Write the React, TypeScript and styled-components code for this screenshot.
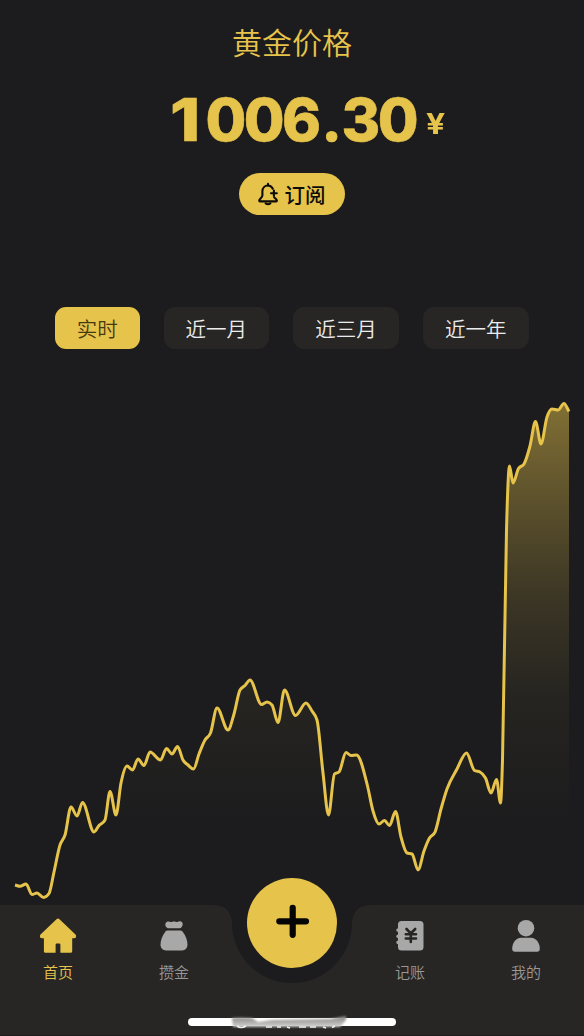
import React from 'react';
import styled, { createGlobalStyle } from 'styled-components';

const GOLD = '#e6c34a';
const BG = '#1c1c1e';
const PANEL = '#272625';

const Global = createGlobalStyle`
  * { box-sizing: border-box; }
  body { margin: 0; background: ${BG}; }
  button { font: inherit; border: 0; padding: 0; background: none; }
`;

const Screen = styled.main`
  width: 584px;
  height: 1036px;
  overflow: hidden;
  display: flex;
  flex-direction: column;
  background: ${BG};
  font-family: 'Noto Sans CJK SC', sans-serif;
`;

const Header = styled.header`
  display: flex;
  flex-direction: column;
  align-items: center;
  height: 307px;
  padding-top: 20px;
`;

const Title = styled.h1`
  margin: 0;
  font-size: 30px;
  line-height: 42px;
  font-weight: 350;
  color: ${GOLD};
`;

const PriceRow = styled.div`
  display: flex;
  align-items: baseline;
  align-self: flex-start;
  height: 77px;
  margin: 22px 0 0 170px;
  color: ${GOLD};
  font-family: Inter, sans-serif;
  line-height: 72px;
`;

const Price = styled.span`
  width: 256px;
  white-space: nowrap;
  font-size: 59px;
  font-weight: 850;
  letter-spacing: -2.6px;
  -webkit-text-stroke: 0.6px ${GOLD};
`;

const LeadDigit = styled.span`
  display: inline-block;
  margin-right: 12px;
  transform: scaleX(1.16);
  transform-origin: left;
`;

const Point = styled.span`
  margin: 0 2px 0 3px;
`;

const Currency = styled.span`
  position: relative;
  top: -7px;
  font-size: 28px;
  font-weight: 700;
  line-height: 30px;
  transform: scaleX(1.2);
  transform-origin: left;
`;

const Subscribe = styled.button`
  display: flex;
  align-items: center;
  justify-content: center;
  gap: 6px;
  width: 106px;
  height: 42px;
  margin-top: 12px;
  padding-right: 2px;
  border-radius: 21px;
  background: ${GOLD};
  color: #0d0c08;
  font-size: 20.5px;
  font-weight: 500;
  line-height: 42px;
`;

const Tabs = styled.nav`
  display: flex;
  gap: 24px;
  padding-left: 55px;
  height: 42px;
`;

const Tab = styled.button<{ $active?: boolean }>`
  height: 42px;
  width: ${(p) => (p.$active ? 84.5 : 105.7)}px;
  border-radius: 11px;
  background: ${(p) => (p.$active ? GOLD : PANEL)};
  color: ${(p) => (p.$active ? '#443a12' : '#ececec')};
  font-size: 20.5px;
  font-weight: 350;
  line-height: 42px;
`;

const ChartArea = styled.section`
  height: 556px;
  svg { display: block; }
`;

const BottomBar = styled.footer`
  position: relative;
  height: 131px;
`;

const BarShape = styled.svg`
  position: absolute;
  inset: 0;
`;

const NavItems = styled.nav`
  position: relative;
  display: grid;
  grid-template-columns: 116px 116px 120px 116px 116px;
  height: 113px;
`;

const NavItem = styled.button<{ $active?: boolean }>`
  display: flex;
  flex-direction: column;
  align-items: center;
  justify-content: flex-start;
  padding-top: 11px;
  height: 90px;
  color: ${(p) => (p.$active ? GOLD : '#a8a8a8')};
  svg { display: block; }
`;

const NavLabel = styled.span<{ $active?: boolean }>`
  margin-top: 7px;
  font-size: 15px;
  line-height: 22px;
  font-weight: 350;
  color: ${(p) => (p.$active ? GOLD : '#989898')};
`;

const AddButton = styled.button`
  justify-self: center;
  width: 90px;
  height: 90px;
  margin-top: -27px;
  border-radius: 50%;
  background: ${GOLD};
  display: flex;
  align-items: center;
  justify-content: center;
`;

const HomeIndicator = styled.div`
  position: relative;
  width: 208px;
  height: 8px;
  margin: 0 auto;
  border-radius: 4px;
  background: #fff;
`;

const Smudge = styled.svg`
  position: absolute;
  left: 36px;
  top: -16px;
`;

type Coord = [number, number];

const CHART_TOP = 349;

const points: Coord[] = [
  [15, 885], [20, 886.3], [26, 884], [32, 894.5], [37, 893], [43.5, 897.5], [49, 893.5], [54, 872],
  [60, 845], [65, 835], [71, 807], [77, 816], [82.5, 802.5], [94, 832], [99, 825.5], [105, 820],
  [110, 791.5], [116, 815], [121, 783], [127, 766], [132.5, 770], [138, 759], [144, 765.5], [150, 752],
  [160.5, 760], [166.5, 748.5], [172, 754], [177.5, 746.5], [183, 760], [188, 765],
  [193.5, 769], [199, 754], [205, 740], [210.5, 733], [217, 708], [228, 730], [234, 714],
  [240, 690], [245, 685.5], [250, 680], [261.5, 704.5], [267, 702], [272, 705],
  [278, 722.5], [284.5, 690], [295.5, 715.5], [306, 703], [312, 711],
  [317, 720], [323, 773], [328.5, 815], [334.5, 774], [339, 772], [346, 752.5], [351, 755.5], [356.5, 755],
  [367.5, 786], [373, 811], [379, 824], [384.5, 820.5], [389.5, 825.5], [395.5, 811.5],
  [401, 837], [407, 853], [412, 854], [418, 870], [424, 851], [429.5, 838], [435, 832], [441, 809],
  [447, 789], [457, 769], [466.5, 753], [474.5, 770.5], [480, 772], [485.5, 778],
  [491, 793], [496.5, 779.5], [500.5, 803], [502.5, 760], [506.5, 530], [509.5, 466], [513, 483], [518.5, 468.5],
  [524, 464], [530, 446], [535.5, 421.5], [541, 444], [547, 417], [552, 409], [558, 410],
  [564, 403.5], [569, 411.5],
].map(([x, y]) => [x, y - CHART_TOP] as Coord);

// Monotone cubic interpolation keeps each extreme on its data point.
function smoothPath(p: Coord[]): string {
  const n = p.length;
  const slopes = p.slice(1).map((q, i) => (q[1] - p[i][1]) / (q[0] - p[i][0]));
  const tangents = p.map((_, i) => {
    if (i === 0) return slopes[0];
    if (i === n - 1) return slopes[n - 2];
    const a = slopes[i - 1];
    const b = slopes[i];
    if (a * b <= 0) return 0;
    const h0 = p[i][0] - p[i - 1][0];
    const h1 = p[i + 1][0] - p[i][0];
    const mean = (a * h1 + b * h0) / (h0 + h1);
    return Math.sign(a) * 2 * Math.min(Math.abs(a), Math.abs(b), 0.5 * Math.abs(mean));
  });
  let d = `M${p[0][0]},${p[0][1]}`;
  for (let i = 1; i < n; i++) {
    const h = (p[i][0] - p[i - 1][0]) / 3;
    d += `C${p[i - 1][0] + h},${p[i - 1][1] + tangents[i - 1] * h} ${p[i][0] - h},${p[i][1] - tangents[i] * h} ${p[i][0]},${p[i][1]}`;
  }
  return d;
}

const line = smoothPath(points);

const PriceChart = () => (
  <ChartArea>
    <svg width="584" height="556" viewBox="0 0 584 556">
      <defs>
        <linearGradient id="fill" gradientUnits="userSpaceOnUse" x1="0" y1="54" x2="0" y2="474">
          <stop offset="0" stopColor={GOLD} stopOpacity="0.5" />
          <stop offset="0.23" stopColor={GOLD} stopOpacity="0.32" />
          <stop offset="0.47" stopColor={GOLD} stopOpacity="0.15" />
          <stop offset="0.7" stopColor={GOLD} stopOpacity="0.05" />
          <stop offset="1" stopColor={GOLD} stopOpacity="0" />
        </linearGradient>
      </defs>
      <path d={`${line}L569,549L15,549Z`} fill="url(#fill)" />
      <path d={line} fill="none" stroke={GOLD} strokeWidth="3" strokeLinejoin="round" />
    </svg>
  </ChartArea>
);

const BellPlus = () => (
  <svg width="22" height="24" viewBox="0 0 22 24" fill="none" stroke="#0d0c08" strokeWidth="2.1" strokeLinecap="round" strokeLinejoin="round">
    <path d="M15.8 6.7C14.8 4.6 13.2 3.5 11 3.5C7.7 3.5 5.4 6 5.4 9.3V13.6C5.4 15.3 2.2 17 2.2 18.6C2.2 19.1 2.5 19.4 3 19.4H19.1C19.6 19.4 19.9 19.1 19.9 18.6C19.9 17.5 18.2 16.6 17.2 15.4" />
    <path d="M11 1.8V3.4M8.7 21.4Q11 23 13.3 21.4M14 11.3H19.8M16.9 8.6V14" />
  </svg>
);

const HomeIcon = () => (
  <svg width="38" height="38" viewBox="0 0 38 38" fill="currentColor">
    <path d="M17.5 3.2Q19 1.8 20.5 3.2L36.5 18.6Q37.5 19.7 37 21Q36.6 22.3 35 22.3H33.2V35.2Q33.2 36.8 31.6 36.8H21.4V28.8Q21.4 27.6 20.2 27.6H17.8Q16.6 27.6 16.6 28.8V36.8H6.5Q4.9 36.8 4.9 35.2V22.3H3Q1.4 22.3 1 21Q.5 19.7 1.5 18.6Z" />
  </svg>
);

const PouchIcon = () => (
  <svg width="38" height="38" viewBox="0 0 38 38" fill="currentColor">
    <path d="M12.2 5.7C13.2 5.2 14.5 5.4 15.6 5.9C16.8 6.3 17.5 5.4 19 5.4C20.5 5.4 21 6.3 22.4 5.9C23.7 5.3 25 5.1 26 5.6C28.3 6.6 28.1 9.7 26.5 11.3C26 12 25.4 12.2 24.7 12.2H13.3C12.6 12.2 12 12 11.5 11.3C9.9 9.6 9.8 6.8 12.2 5.7Z" />
    <path d="M12.5 14.5H25.5C26.3 14.5 27 14.8 27.5 15.4C30.5 19.2 32.5 24 32.5 28.5C32.5 32 30.2 34.4 27 34.4H11C7.8 34.4 5.5 32 5.5 28.5C5.5 24 7.5 19.2 10.5 15.4C11 14.8 11.7 14.5 12.5 14.5Z" />
  </svg>
);

const LedgerIcon = () => (
  <svg width="38" height="38" viewBox="0 0 38 38">
    <path fill="currentColor" d="M10.5 5H29Q32.5 5 32.5 8.5V31Q32.5 34.5 29 34.5H10.5Q7 34.5 7 31V28.2Q5.2 27.8 5.2 26.3Q5.2 24.8 7 24.4V22.2Q5.2 21.8 5.2 20.3Q5.2 18.8 7 18.4V16Q5.2 15.6 5.2 14.1Q5.2 12.6 7 12.2V8.5Q7 5 10.5 5Z" />
    <path fill="none" stroke={PANEL} strokeWidth="2.6" strokeLinecap="round" d="M15.5 13L19.8 17.5L24.2 13M19.8 17.5V26M14.8 18.2H25M14.8 22.5H25" />
  </svg>
);

const PersonIcon = () => (
  <svg width="38" height="38" viewBox="0 0 38 38" fill="currentColor">
    <circle cx="19" cy="12.2" r="8.3" />
    <path d="M13.8 21.7H24.2C29 21.7 32.8 27 32.8 32.5Q32.8 35.7 30 35.7H8Q5.2 35.7 5.2 32.5C5.2 27 9 21.7 13.8 21.7Z" />
  </svg>
);

export default function App() {
  return (
    <>
      <Global />
      <Screen>
        <Header>
          <Title>黄金价格</Title>
          <PriceRow>
            <Price>
              <LeadDigit>1</LeadDigit>006<Point>.</Point>30
            </Price>
            <Currency>¥</Currency>
          </PriceRow>
          <Subscribe>
            <BellPlus />
            订阅
          </Subscribe>
        </Header>
        <Tabs>
          <Tab $active>实时</Tab>
          <Tab>近一月</Tab>
          <Tab>近三月</Tab>
          <Tab>近一年</Tab>
        </Tabs>
        <PriceChart />
        <BottomBar>
          <BarShape width="584" height="131" viewBox="0 0 584 131">
            <path fill={PANEL} d="M0 0H213Q231 0 232 18A60 60 0 0 0 352 18Q353 0 371 0H584V130H0Z" />
          </BarShape>
          <NavItems>
            <NavItem $active>
              <HomeIcon />
              <NavLabel $active>首页</NavLabel>
            </NavItem>
            <NavItem>
              <PouchIcon />
              <NavLabel>攒金</NavLabel>
            </NavItem>
            <AddButton aria-label="添加">
              <svg width="40" height="40" viewBox="0 0 40 40" stroke="#050505" strokeWidth="6.2" strokeLinecap="round">
                <path d="M20.7 4.8V31.8M7.3 18.3H34" />
              </svg>
            </AddButton>
            <NavItem>
              <LedgerIcon />
              <NavLabel>记账</NavLabel>
            </NavItem>
            <NavItem>
              <PersonIcon />
              <NavLabel>我的</NavLabel>
            </NavItem>
          </NavItems>
          <HomeIndicator>
            <Smudge width="130" height="30" viewBox="0 0 130 30">
              <defs>
                <filter id="soft" x="-10%" y="-50%" width="120%" height="200%">
                  <feGaussianBlur stdDeviation="1" />
                </filter>
                <linearGradient id="haze" x1="0" y1="0" x2="0" y2="1">
                  <stop offset="0" stopColor="#85817f" />
                  <stop offset="1" stopColor="#d2d2d2" />
                </linearGradient>
              </defs>
              <g filter="url(#soft)">
                <path fill="url(#haze)" d="M8 16Q16 15 28 16L34 20L48 18L106 17L122 14V18L116 25H9Z" />
              </g>
              <path stroke="#f0f0f0" strokeWidth="1.6" fill="none" d="M13 24Q17 27 22 24M42 25H48M53 25H57M63 25L66 26M75 25H82M86 25H92M99 25L102 26M108 25.5L111 24" />
            </Smudge>
          </HomeIndicator>
        </BottomBar>
      </Screen>
    </>
  );
}
